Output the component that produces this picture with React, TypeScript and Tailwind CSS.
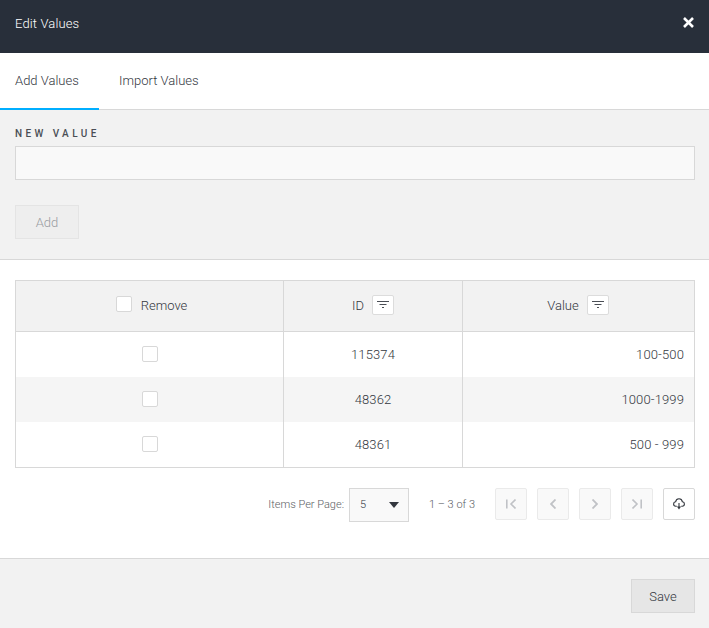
const ROWS = [
  { id: '115374', value: '100-500' },
  { id: '48362', value: '1000-1999' },
  { id: '48361', value: '500 - 999' },
];

function FilterButton() {
  return (
    <button className="w-[22px] h-[20px] mb-[2px] bg-white border border-[#dcdcdc] rounded-[2px] flex items-center justify-center">
      <svg width="12" height="8" viewBox="0 0 12 8" fill="none" stroke="#4a4e55" strokeWidth="1">
        <path d="M0 0.5H12M2.5 3.5H9.5M5 6.5H7" />
      </svg>
    </button>
  );
}

function Check({ className = '' }: { className?: string }) {
  return <span className={`w-4 h-4 block bg-white border border-[#d8d8d8] rounded-[2px] ${className}`} />;
}

function PageButton({ children }: { children: React.ReactNode }) {
  return (
    <button className="w-8 h-8 bg-[#f9f9f9] border border-[#eaeaea] rounded-[2px] flex items-center justify-center text-[#c0c2c6]">
      {children}
    </button>
  );
}

export default function App() {
  return (
    <div className="w-[709px] h-[628px] bg-white flex flex-col font-['Roboto',sans-serif] font-light text-[13px] text-[#33373e] overflow-hidden">
      {/* Header */}
      <div className="h-[53px] shrink-0 bg-[#282f3a] flex items-center justify-between pl-[15px] pr-[15px] pb-[6px] text-white">
        <span className="tracking-[0.01em]">Edit Values</span>
        <svg width="11" height="11" viewBox="0 0 11 11" stroke="white" strokeWidth="2.6" className="mb-[2px]">
          <path d="M1 1L10 10M10 1L1 10" />
        </svg>
      </div>

      {/* Tabs */}
      <div className="h-[57px] shrink-0 flex border-b border-[#d8d8d8]">
        <div className="w-[99px] h-[57px] pl-[15px] pt-[18px] border-b-2 border-[#00aeff]">Add Values</div>
        <div className="pl-[20px] pt-[18px]">Import Values</div>
      </div>

      {/* New value form */}
      <div className="h-[150px] shrink-0 bg-[#f2f2f2] border-b border-[#d8d8d8] pl-[15px] pr-[14px] pt-[18px]">
        <div className="text-[10px] leading-[12px] font-medium tracking-[0.34em] text-[#4a4e55]">NEW VALUE</div>
        <input className="block w-full h-[34px] mt-[6px] bg-[#f9f9f9] border border-[#d8d8d8]" />
        <button className="block w-[64px] h-[34px] mt-[25px] pt-[1px] bg-[#eeeeee] border border-[#e4e4e4] text-[#999ca1]">Add</button>
      </div>

      {/* Table */}
      <div className="ml-[15px] mr-[14px] mt-[20px] shrink-0 border border-[#d8d8d8]">
        <div className="flex h-[51px] bg-[#f2f2f2] border-b border-[#d8d8d8]">
          <div className="w-[268px] flex items-center justify-center gap-[9px] pl-[4px] border-r border-[#d8d8d8]">
            <Check className="mb-[4px]" />
            <span>Remove</span>
          </div>
          <div className="w-[179px] flex items-center justify-center gap-[8px] border-r border-[#d8d8d8]">
            <span>ID</span>
            <FilterButton />
          </div>
          <div className="flex-1 flex items-center justify-center gap-[8px] pr-[1px]">
            <span>Value</span>
            <FilterButton />
          </div>
        </div>
        {ROWS.map((row, i) => (
          <div key={row.id} className={`flex h-[45px] tracking-[0.01em] ${i === 1 ? 'bg-[#f5f5f5]' : 'bg-white'}`}>
            <div className="w-[268px] flex items-center justify-center border-r border-[#d8d8d8] pl-[1px]">
              <Check className="mb-[1px]" />
            </div>
            <div className="w-[179px] flex items-center justify-center border-r border-[#d8d8d8]">{row.id}</div>
            <div className="flex-1 flex items-center justify-end pr-[10px]">{row.value}</div>
          </div>
        ))}
      </div>

      {/* Pagination */}
      <div className="h-[91px] shrink-0 pt-[20px] border-b border-[#d8d8d8] flex items-start justify-end pr-[14px] text-[#5a5e65]">
        <span className="text-[11px] leading-[33px] mr-[5px]">Items Per Page:</span>
        <div className="w-[60px] h-[34px] bg-[#f9f9f9] border border-[#d8d8d8] flex items-center justify-between pl-[10px] pr-[9px] text-[11px] text-[#33373e]">
          <span className="mt-[1px]">5</span>
          <svg width="10" height="6" viewBox="0 0 10 6" className="mb-[1px]"><path d="M0 0H10L5 6Z" fill="#33373e" /></svg>
        </div>
        <span className="text-[11px] leading-[33px] ml-[20px] mr-[20px]">1 – 3 of 3</span>
        <div className="flex gap-[10px]">
          <PageButton>
            <svg width="10" height="10" viewBox="0 0 10 10" fill="none" stroke="currentColor" strokeWidth="1.6"><path d="M0.8 0.5V9.5M9.5 0.5L5 5L9.5 9.5" /></svg>
          </PageButton>
          <PageButton>
            <svg width="6" height="10" viewBox="0 0 6 10" fill="none" stroke="currentColor" strokeWidth="1.8"><path d="M5.5 0.5L1 5L5.5 9.5" /></svg>
          </PageButton>
          <PageButton>
            <svg width="6" height="10" viewBox="0 0 6 10" fill="none" stroke="currentColor" strokeWidth="1.8"><path d="M0.5 0.5L5 5L0.5 9.5" /></svg>
          </PageButton>
          <PageButton>
            <svg width="10" height="10" viewBox="0 0 10 10" fill="none" stroke="currentColor" strokeWidth="1.6"><path d="M9.2 0.5V9.5M0.5 0.5L5 5L0.5 9.5" /></svg>
          </PageButton>
          <button className="w-8 h-8 bg-white border border-[#d8d8d8] rounded-[2px] flex items-center justify-center">
            <svg width="12" height="12" viewBox="0 0 12 12" fill="none" stroke="#33373e" strokeWidth="1.1">
              <path d="M3.8 8.2H2.8C1.5 8.2 0.6 7.2 0.6 6C0.6 4.8 1.5 3.9 2.6 3.8C2.9 2.2 4.3 0.8 6 0.8C7.7 0.8 9.1 2.2 9.4 3.8C10.5 3.9 11.4 4.8 11.4 6C11.4 7.2 10.5 8.2 9.2 8.2H8.2" />
              <path d="M6 5V9" />
              <path d="M3.9 8.6H8.1L6 11.4Z" fill="#33373e" stroke="none" />
            </svg>
          </button>
        </div>
      </div>

      {/* Footer */}
      <div className="flex-1 bg-[#f2f2f2] flex justify-end pt-[20px] pr-[14px]">
        <button className="w-[64px] h-[34px] pt-[1px] bg-[#e6e6e6] border border-[#d8d8d8]">Save</button>
      </div>
    </div>
  );
}
